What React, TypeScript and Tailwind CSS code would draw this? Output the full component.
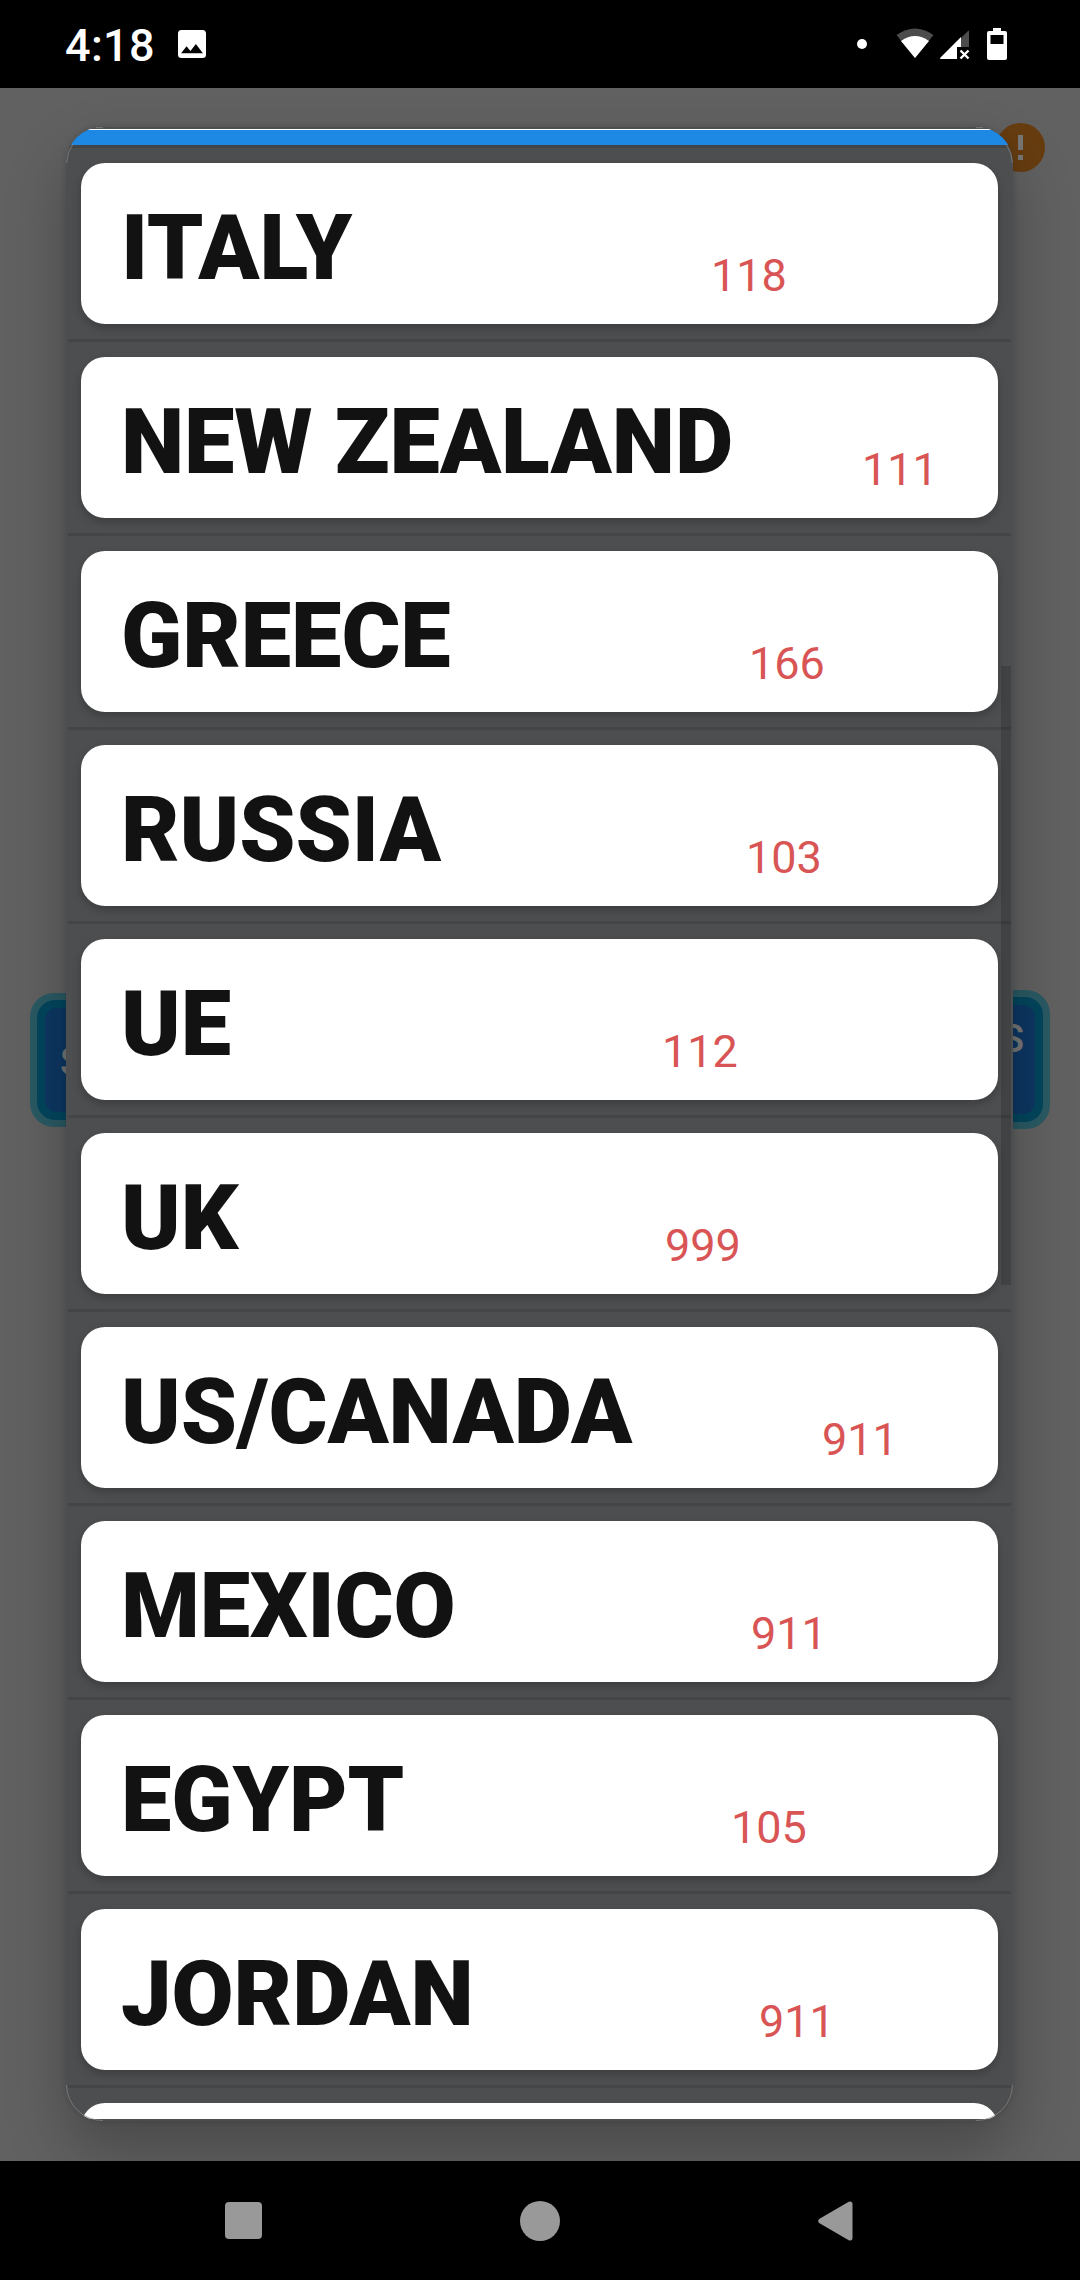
type Entry = { name: string; phone: string; offset: string };

const entries: Entry[] = [
  { name: 'ITALY', phone: '118', offset: 'ml-[630px]' },
  { name: 'NEW ZEALAND', phone: '111', offset: 'ml-[781px]' },
  { name: 'GREECE', phone: '166', offset: 'ml-[668px]' },
  { name: 'RUSSIA', phone: '103', offset: 'ml-[665px]' },
  { name: 'UE', phone: '112', offset: 'ml-[581px]' },
  { name: 'UK', phone: '999', offset: 'ml-[584px]' },
  { name: 'US/CANADA', phone: '911', offset: 'ml-[741px]' },
  { name: 'MEXICO', phone: '911', offset: 'ml-[670px]' },
  { name: 'EGYPT', phone: '105', offset: 'ml-[650px]' },
  { name: 'JORDAN', phone: '911', offset: 'ml-[678px]' },
];

function StatusBar() {
  return (
    <header className="flex h-[88px] shrink-0 items-center bg-black text-white">
      <span className="ml-[65px] w-[113px] pt-1 text-[45px] leading-[88px] font-medium tracking-[0.3px]">4:18</span>
      <svg className="h-7 w-7" viewBox="3 3 18 18" fill="#fff">
        <path d="M21 19V5c0-1.100-.9-2-2-2H5c-1.100 0-2 .9-2 2v14c0 1.100.9 2 2 2h14c1.100 0 2-.9 2-2zM8.500 13.500l2.500 3.010L14.500 12l4.500 6H5l3.500-4.500z" />
      </svg>
      <span className="ml-auto h-2.5 w-2.5 rounded-full bg-white" />
      <svg className="mt-[-1px] ml-[29px] h-[31px] w-[38px]" viewBox="0 0 38 31">
        <path d="M.5 7Q19-6 37.500 7L19 30z" fill="#4c4c4c" />
        <path d="M5 13Q19 3 33 13L19 30z" fill="#fff" />
      </svg>
      <svg className="mt-px ml-[6px] h-[30px] w-[30px]" viewBox="0 0 30 30">
        <path d="M21 8l7-7q1-1 1 .5V17H21z" fill="#4c4c4c" />
        <path d="M21 7v10h-4v12H1q-1.500 0-.5-1.500z" fill="#fff" />
        <path d="M20.500 20.500l8 8M28.500 20.500l-8 8" stroke="#fff" strokeWidth="2.400" />
      </svg>
      <svg className="mr-[73px] ml-[17px] h-8 w-5" viewBox="0 0 20 32">
        <path fillRule="evenodd" d="M6 0h8v3h4q2 0 2 2v25q0 2-2 2H2q-2 0-2-2V5q0-2 2-2h4zM3.500 7v9h13V7z" fill="#fff" />
      </svg>
    </header>
  );
}

function Backdrop() {
  return (
    <div className="flex h-full flex-col">
      <div className="flex justify-end pt-[35px] pr-[35px]">
        <div className="flex h-[49px] w-[49px] flex-col items-center gap-[5px] rounded-full bg-[#673d10] pt-3">
          <span className="h-[15px] w-[5px] bg-[#777]" />
          <span className="h-[5px] w-[5px] bg-[#777]" />
        </div>
      </div>
      <div className="mt-[818px] flex items-center justify-between px-[30px] text-[38px] leading-[60px] font-medium text-[#777]">
        <div className="h-[134px] w-[300px] rounded-3xl bg-[#2a5a64] p-[7px]">
          <div className="h-full rounded-[18px] bg-[#03465e] p-2">
            <div className="h-full rounded-xl bg-[#0d3762] pt-[24px] pl-[15px]">S</div>
          </div>
        </div>
        <div className="h-[139px] w-[300px] rounded-3xl bg-[#2a5a64] p-[7px]">
          <div className="h-full rounded-[18px] bg-[#03465e] p-2">
            <div className="h-full rounded-xl bg-[#0d3762] pt-[4px] pr-[11px] text-right">S</div>
          </div>
        </div>
      </div>
    </div>
  );
}

function EntryRow({ entry }: { entry: Entry }) {
  return (
    <li className="h-[194px] shrink-0 border-b-3 border-[#444547] px-[13px] py-[15px]">
      <div className="grid h-[161px] rounded-3xl bg-white shadow-[0_4px_9px_rgba(0,0,0,0.22)]">
        <span className="col-start-1 row-start-1 ml-[40px] h-[161px] text-[90px] leading-[171px] font-black tracking-[-0.1px] whitespace-nowrap text-[#121212]">
          {entry.name}
        </span>
        <span className={`col-start-1 row-start-1 mt-[86px] h-[54px] text-[45px] leading-[54px] text-[#d95555] ${entry.offset}`}>
          {entry.phone}
        </span>
      </div>
    </li>
  );
}

function Dialog() {
  return (
    <section className="relative h-[1994px] w-[947px] rounded-[36px] bg-[#4d4e50] shadow-[0_30px_60px_rgba(0,0,0,0.25),0_0_6px_rgba(0,0,0,0.15)]">
      <div className="h-full overflow-hidden rounded-[36px] px-0.5 pt-0.5 pb-0.5">
        <div className="-mx-0.5 h-4 border-t border-white bg-[#1e88e5]" />
        <ul className="flex h-[1974px] flex-col overflow-hidden border-t-3 border-[#444547]">
          {entries.map((entry) => (
            <EntryRow key={entry.name} entry={entry} />
          ))}
          <li className="h-[194px] shrink-0 px-[13px] py-[15px]">
            <div className="h-[161px] rounded-3xl bg-white" />
          </li>
        </ul>
      </div>
      <span className="absolute top-[539px] right-0.5 h-[619px] w-2.5 bg-black/15" />
      <svg className="absolute inset-0" width="947" height="1994" fill="none" stroke="#898989" strokeWidth="0.700">
        <path d="M.5 36A36 36 0 0 1 7 17M30 .7h7M940 17a36 36 0 0 1 6.500 19M910 .7h7M.5 1958A36 36 0 0 0 37 1993.500M946.500 1958A36 36 0 0 1 910 1993.500" />
      </svg>
    </section>
  );
}

function NavigationBar() {
  return (
    <nav className="flex h-[119px] shrink-0 items-center justify-between bg-black pr-[227px] pl-[225px]">
      <span className="h-[37px] w-[37px] rounded bg-[#999]" />
      <span className="h-10 w-10 rounded-full bg-[#999]" />
      <svg className="h-10 w-[35px]" viewBox="0 0 35 40" fill="#999" stroke="#999" strokeWidth="5" strokeLinejoin="round">
        <path d="M2.800 20L32 3v34z" />
      </svg>
    </nav>
  );
}

export default function App() {
  return (
    <div className="flex h-[2280px] w-[1080px] flex-col overflow-hidden bg-black font-['Roboto',sans-serif]">
      <StatusBar />
      <main className="relative h-[2073px] shrink-0 overflow-hidden bg-[#616161]">
        <Backdrop />
        <div className="absolute inset-0 flex justify-center pt-[39px] pr-px">
          <Dialog />
        </div>
      </main>
      <NavigationBar />
    </div>
  );
}
